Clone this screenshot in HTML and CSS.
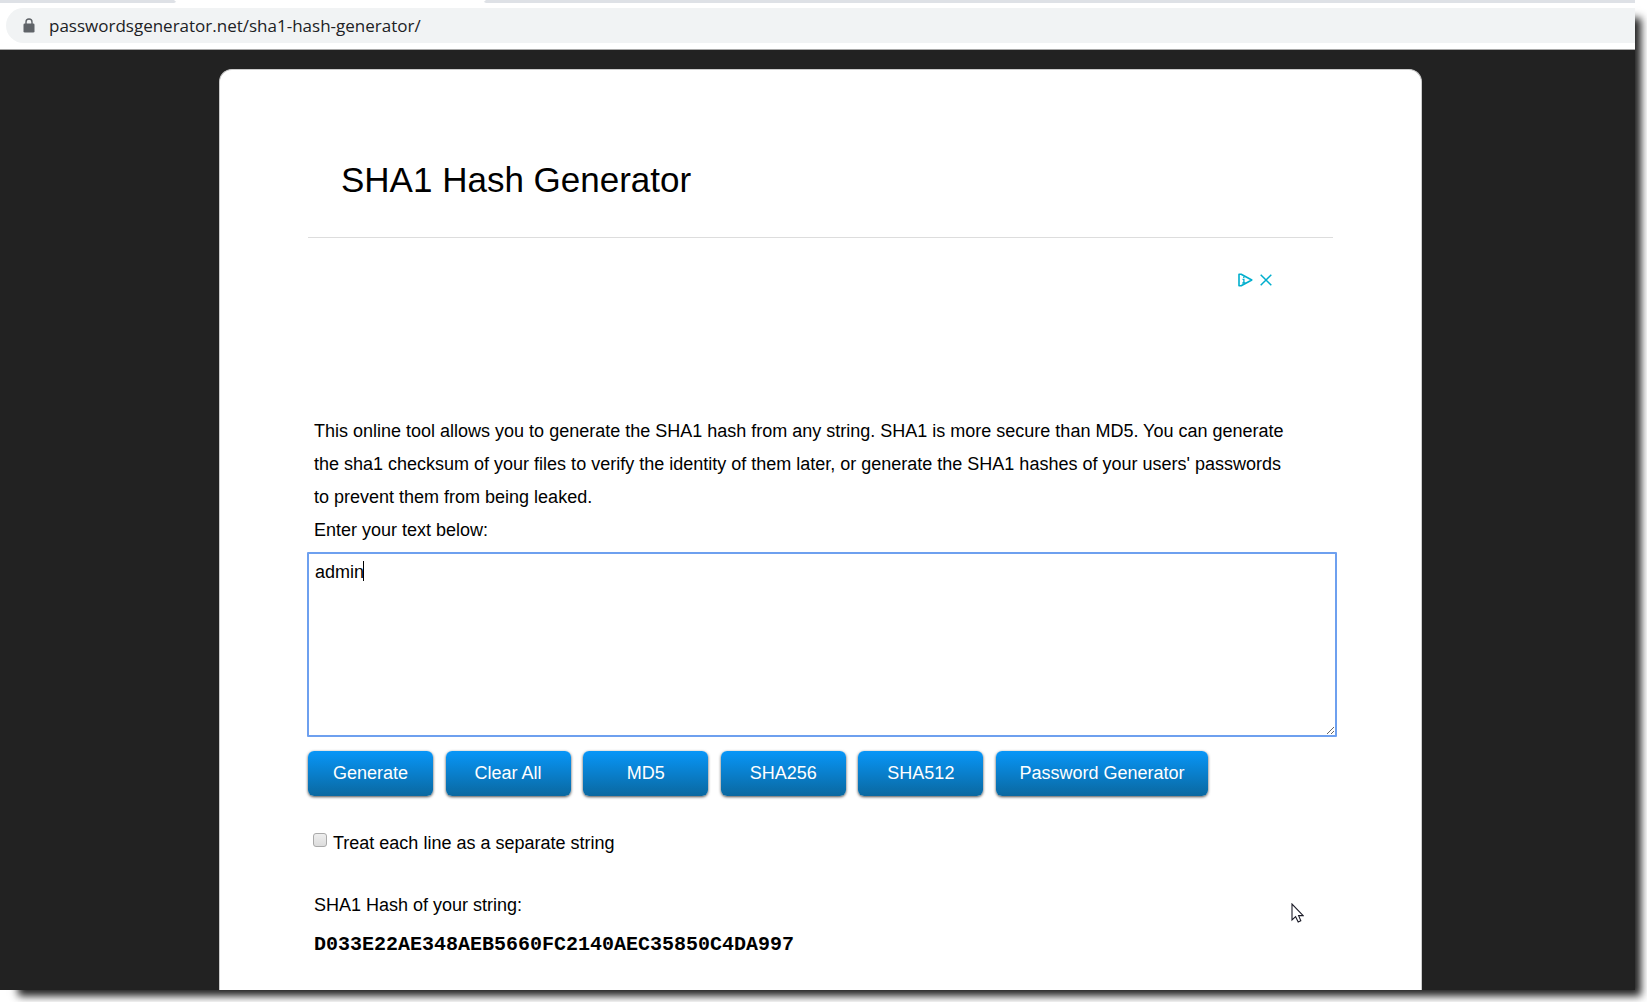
FILE: index.html
```html
<!DOCTYPE html>
<html lang="en">
<head>
<meta charset="utf-8">
<title>SHA1 Hash Generator</title>
<link rel="stylesheet" href="styles.css">
</head>
<body>
<div class="window">
  <header class="chrome">
    <div class="tab-strip"><svg class="tab" viewBox="0 0 312 3" aria-hidden="true"><path d="M4 3Q2 2 0 0H312Q310 2 308 3Z" fill="#fff"/><path d="M0 3Q3 2 4 0H308Q309 2 312 3Z" fill="#fff"/></svg></div>
    <div class="toolbar">
      <div class="omnibox">
        <svg class="lock" viewBox="0 0 12 15" aria-hidden="true"><path d="M3 6V4a3 3 0 0 1 6 0v2" fill="none" stroke="#5f6368" stroke-width="1.4"/><rect x="0.5" y="5.5" width="11" height="9" rx="1.3" fill="#5f6368"/></svg>
        <input class="address" type="text" aria-label="Address" value="passwordsgenerator.net/sha1-hash-generator/">
      </div>
    </div>
  </header>
  <div class="page">
    <main class="panel">
      <h1 class="title">SHA1 Hash Generator</h1>
      <div class="ad">
        <button class="ad-button" type="button" aria-label="Ad choices"><svg class="ad-choices" viewBox="0 0 15 14" aria-hidden="true"><path d="M1 1.2V12.8H3.2L13.8 7 3.2 1.2Z" fill="none" stroke="#00aecd" stroke-width="1.6" stroke-linejoin="round"/><path d="M5.8 3.4V5M4.5 6.3H5.9V10M4.3 10H7.5" fill="none" stroke="#00aecd" stroke-width="1.3"/></svg></button>
        <button class="ad-button" type="button" aria-label="Close ad"><svg class="ad-close" viewBox="0 0 12 12" aria-hidden="true"><path d="M.7.7 11.3 11.3M11.3.7.7 11.3" stroke="#00aecd" stroke-width="1.5"/></svg></button>
      </div>
      <p class="intro">This online tool allows you to generate the SHA1 hash from any string. SHA1 is more secure than MD5. You can generate the sha1 checksum of your files to verify the identity of them later, or generate the SHA1 hashes of your users' passwords to prevent them from being leaked.</p>
      <label class="field-label" for="source">Enter your text below:</label>
      <div class="editor">
        <textarea class="source" id="source">admin</textarea>
        <span class="caret"></span>
      </div>
      <div class="actions">
        <button class="action" type="button">Generate</button>
        <button class="action" type="button">Clear All</button>
        <button class="action" type="button">MD5</button>
        <button class="action" type="button">SHA256</button>
        <button class="action" type="button">SHA512</button>
        <button class="action" type="button">Password Generator</button>
      </div>
      <div class="option">
        <input class="tick" type="checkbox" id="lines">
        <label for="lines">Treat each line as a separate string</label>
      </div>
      <p class="result-label">SHA1 Hash of your string:</p>
      <output class="hash" for="source">D033E22AE348AEB5660FC2140AEC35850C4DA997</output>
    </main>
  </div>
  <svg class="pointer" viewBox="0 0 13 20" aria-hidden="true"><path d="M1 1V17L4.6 13.7 7.2 19 9.8 17.8 7.6 12.6H12.2Z" fill="#fff" stroke="#1c1c28" stroke-width="1.1"/></svg>
</div>
</body>
</html>
```
FILE: styles.css
```css
* { box-sizing: border-box; }

body {
  margin: 0;
  padding: 0 12px 12px 0;
  background: #fff;
  color: #000;
  font: 18px/33px "Liberation Sans", Arial, sans-serif;
}

.window {
  position: relative;
  display: flex;
  flex-direction: column;
  min-height: calc(100vh - 12px);
  box-shadow: 12px 12px 8px -6px #222;
}

.chrome { background: #fff; border-bottom: 1px solid #a8a8a8; }
.tab-strip { height: 3px; padding-left: 174px; background: #dee1e6; }
.tab { display: block; width: 312px; height: 3px; }
.toolbar { padding: 5px 0 6px 6px; }

.omnibox {
  display: flex;
  align-items: center;
  gap: 14px;
  height: 35px;
  padding-left: 17px;
  border-radius: 18px 0 0 18px;
  background: #f1f3f4;
}

.lock { width: 12px; height: 15px; }

.address {
  flex: 1;
  padding: 0;
  border: 0;
  outline: 0;
  background: none;
  color: #202124;
  font: 17px/24px "Open Sans", "Noto Sans", sans-serif;
}

.page {
  flex: 1;
  display: flex;
  padding: 19px 213px 0 219px;
  background: #222;
}

.panel {
  flex: 1;
  padding: 80px 88px 28px;
  border: 1px solid #ccc;
  border-bottom: 0;
  border-radius: 13px 13px 0 0;
  background: #fff;
}

.title {
  margin: 0;
  padding: 9px 33px 36px;
  border-bottom: 1px solid #ddd;
  font-size: 35px;
  font-weight: 400;
  line-height: 42px;
}

.ad {
  display: flex;
  justify-content: flex-end;
  align-items: flex-start;
  gap: 7px;
  height: 177px;
  padding: 35px 61px 0 0;
}

.ad-button { display: flex; padding: 0; border: 0; background: none; }
.ad-choices { width: 15px; height: 14px; }
.ad-close { width: 12px; height: 14px; }

.intro { max-width: 992px; margin: 0; padding: 0 6px; }
.field-label { display: block; padding: 0 6px; }

.editor { position: relative; margin: 5px -4px 0 -1px; }

.source {
  display: block;
  width: 100%;
  height: 185px;
  padding: 2px 6px;
  border: 2px solid #6ea0ef;
  border-radius: 1px;
  outline: 0;
  background: #fff;
  color: #000;
  font: inherit;
}

.caret {
  position: absolute;
  top: 9px;
  left: 56px;
  width: 1px;
  height: 20px;
  background: #000;
}

.actions {
  display: flex;
  justify-content: space-between;
  max-width: 900px;
  margin-top: 14px;
}

.action {
  width: 125px;
  height: 45px;
  padding: 0 0 2px;
  border: 0;
  border-radius: 6px;
  background: linear-gradient(#0896f8, #0a68a0);
  box-shadow: 0 1px 3px rgba(0, 0, 0, 0.7);
  color: #fff;
  font: 18px/24px "Liberation Sans", Arial, sans-serif;
}

.action:last-child { width: 212px; }

.option { display: flex; gap: 6px; margin-top: 31px; padding-left: 5px; }

.tick {
  appearance: none;
  width: 14px;
  height: 14px;
  margin: 6px 0 0;
  border: 1px solid #aaa;
  border-radius: 3px;
  background: linear-gradient(#eee, #dcdcdc);
}

.result-label { margin: 29px 0 0; padding: 0 6px; }

.hash {
  display: block;
  padding: 6px 6px 0;
  font: bold 20px/33px "Liberation Mono", "Courier New", monospace;
}

.pointer {
  position: absolute;
  top: 903px;
  left: 1291px;
  width: 13px;
  height: 20px;
}
```
